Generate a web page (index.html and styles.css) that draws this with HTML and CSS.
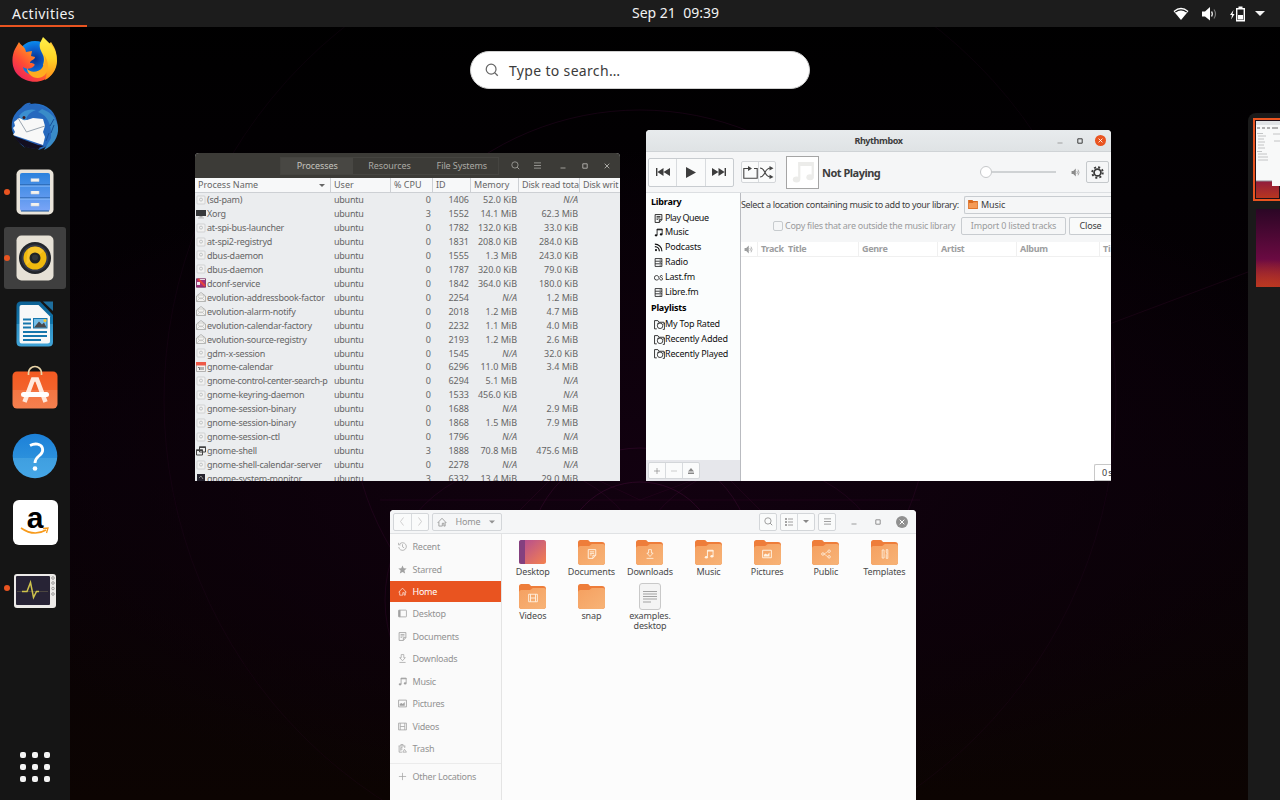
FILE: index.html
```html
<!DOCTYPE html>
<html lang="en">
<head>
<meta charset="utf-8">
<title>Activities</title>
<link rel="stylesheet" href="styles.css">
</head>
<body>
<svg class="defs" width="0" height="0">
  <defs>
    <linearGradient id="gFolder" x1="0" y1="0" x2="1" y2="1"><stop offset="0" stop-color="#f5a060"/><stop offset="1" stop-color="#f7b377"/></linearGradient>
    <linearGradient id="gDesk" x1="0" y1="0" x2="1" y2="1"><stop offset="0" stop-color="#b04a95"/><stop offset="1" stop-color="#f5814f"/></linearGradient>
    <linearGradient id="gFox" x1="1" y1="0" x2="0" y2="1"><stop offset="0" stop-color="#ffd23a"/><stop offset=".35" stop-color="#ff9a1f"/><stop offset=".65" stop-color="#ff4a36"/><stop offset="1" stop-color="#e01070"/></linearGradient>
    <linearGradient id="gTail" x1="0" y1="0" x2="0" y2="1"><stop offset="0" stop-color="#fff04a"/><stop offset=".5" stop-color="#ffd426"/><stop offset="1" stop-color="#ff8a1a"/></linearGradient>
    <radialGradient id="gGlobe"><stop offset="0" stop-color="#0a2f8a"/><stop offset=".6" stop-color="#0b62cf"/><stop offset="1" stop-color="#0a8bee"/></radialGradient>
    <linearGradient id="gBird" x1="0" y1="0" x2="1" y2="1"><stop offset="0" stop-color="#1f5fc4"/><stop offset=".5" stop-color="#2878c8"/><stop offset="1" stop-color="#2a2c8c"/></linearGradient>
    <linearGradient id="gDrawer" x1="0" y1="0" x2="0" y2="1"><stop offset="0" stop-color="#2b82dd"/><stop offset="1" stop-color="#7aa5f7"/></linearGradient>
    <linearGradient id="gBlue" x1="0" y1="0" x2="0" y2="1"><stop offset="0" stop-color="#1c80d8"/><stop offset=".54" stop-color="#2b90dc"/><stop offset=".55" stop-color="#3f9fe0"/><stop offset="1" stop-color="#45a6e6"/></linearGradient>
    <linearGradient id="gBag" x1="0" y1="0" x2="0" y2="1"><stop offset="0" stop-color="#f35a22"/><stop offset=".5" stop-color="#f3632c"/><stop offset=".51" stop-color="#f47643"/><stop offset="1" stop-color="#f5804f"/></linearGradient>
    <linearGradient id="gDoc" x1="0" y1="0" x2="0" y2="1"><stop offset="0" stop-color="#0d6194"/><stop offset=".5" stop-color="#1177ad"/><stop offset=".51" stop-color="#2d90c4"/><stop offset="1" stop-color="#40a4d8"/></linearGradient>
    <symbol id="search" viewBox="0 0 16 16"><circle cx="7" cy="7" r="5.600" fill="none" stroke="currentColor" stroke-width="1.400"/><path d="M11 11l3.600 3.600" stroke="currentColor" stroke-width="1.600"/></symbol>
    <symbol id="menu" viewBox="0 0 8 8"><path d="M0 1h8M0 4h8M0 7h8" stroke="currentColor" stroke-width=".9"/></symbol>
    <symbol id="down" viewBox="0 0 8 4"><path d="M0 0h8L4 4z" fill="currentColor"/></symbol>
    <symbol id="gear" viewBox="0 0 10 10"><rect x="1" y="1" width="8" height="8" rx=".8" fill="#f1f1f1" stroke="#c4c6c7" stroke-width=".7"/><circle cx="5" cy="4.600" r="1.500" fill="none" stroke="#bbbec0" stroke-width=".9"/></symbol>
    <symbol id="mail" viewBox="0 0 10 10"><path d="M.5 4L5 .5 9.500 4v5.500H.5z" fill="#f2f2f0" stroke="#9c9d9b" stroke-width=".7"/><path d="M.6 9.500L4 6h2l3.400 3.500M2 5V3h6v2L5 7z" fill="none" stroke="#b5b6b4" stroke-width=".6"/></symbol>
    <symbol id="note" viewBox="0 0 16 16"><path d="M5.500 12.500V2h9v9" fill="none" stroke="currentColor" stroke-width="1.500"/><path d="M5 3h10" stroke="currentColor" stroke-width="2"/><ellipse cx="3.700" cy="13" rx="2.500" ry="2" fill="currentColor"/><ellipse cx="12.700" cy="11.500" rx="2.500" ry="2" fill="currentColor"/></symbol>
    <symbol id="page" viewBox="0 0 16 16"><path d="M2 1h12v9l-4.500 5H2z M9.500 15v-5H14" fill="none" stroke="currentColor" stroke-width="1.500"/><path d="M4.500 4.500h7M4.500 7h7M4.500 9.500h3" stroke="currentColor" stroke-width="1.400"/></symbol>
    <symbol id="rack" viewBox="0 0 16 16"><path d="M2 1h12v14H2zM2 5.700h12M2 10.300h12" fill="none" stroke="currentColor" stroke-width="1.400"/><path d="M10 3.400h2M10 8h2M10 12.700h2" stroke="currentColor" stroke-width="1.300"/></symbol>
    <symbol id="rss" viewBox="0 0 16 16"><circle cx="3.500" cy="12.500" r="2" fill="currentColor"/><path d="M1.500 6.500a8 8 0 0 1 8 8M1.500 2a12.500 12.500 0 0 1 12.500 12.500" fill="none" stroke="currentColor" stroke-width="2.200"/></symbol>
    <symbol id="lastfm" viewBox="0 0 16 16"><path d="M8.500 10.500C7 12 6 12.500 4.500 12.500a3.800 4 0 1 1 0-8c3 0 3.500 2 4.500 4.500s2.200 3.500 4 3.500 2.500-1 2.500-2.200-1-1.700-2.500-2.200-2-1-2-2 1-1.700 2-1.700 2 .6 2.200 1.600" fill="none" stroke="currentColor" stroke-width="1.400"/></symbol>
    <symbol id="smart" viewBox="0 0 20 18"><path d="M18 5v-1H9L7 1H1v15h4" fill="none" stroke="currentColor" stroke-width="1.500"/><circle cx="11" cy="10.500" r="5" fill="none" stroke="currentColor" stroke-width="1.400"/><path d="M8 4.500l-1.500 3M17 8l2-3v12h-3" fill="none" stroke="currentColor" stroke-width="1.400"/></symbol>
    <symbol id="home" viewBox="0 0 16 16"><path d="M1 9.500L8 2l7 7.500M3 8v6.500h5.500V10H11v4.500h2V8" fill="none" stroke="currentColor" stroke-width="1.300"/></symbol>
    <symbol id="clock" viewBox="0 0 16 16"><path d="M3 3.500A6.800 6.800 0 1 1 1.300 9M1 1.500V5h3.500M8 4v4.500l3 2" fill="none" stroke="currentColor" stroke-width="1.300"/></symbol>
    <symbol id="star" viewBox="0 0 16 16"><path d="M8 .8l2.200 5 5.200.5-4 3.500 1.300 5.200L8 12.300 3.300 15l1.300-5.200-4-3.500 5.200-.5z" fill="currentColor"/></symbol>
    <symbol id="desk" viewBox="0 0 16 16"><rect x="1" y="2" width="14" height="12" rx="1" fill="none" stroke="currentColor" stroke-width="1.400"/><path d="M1 2h3.500v12H1z" fill="currentColor"/></symbol>
    <symbol id="dl" viewBox="0 0 16 16"><path d="M5.700 1h4.600v5.500H13L8 12 3 6.500h2.700zM2.500 15h11" fill="none" stroke="currentColor" stroke-width="1.300"/></symbol>
    <symbol id="pic" viewBox="0 0 16 16"><path d="M1 2h14v12H1z" fill="none" stroke="currentColor" stroke-width="1.500"/><path d="M3 12V9l3-2 2.500 2L12 5.500V12z" fill="currentColor"/></symbol>
    <symbol id="film" viewBox="0 0 16 16"><path d="M1 2h14v12H1zM4 2v12M12 2v12M4 8h8" fill="none" stroke="currentColor" stroke-width="1.400"/></symbol>
    <symbol id="trash" viewBox="0 0 16 16"><path d="M1 3.500h12M5 3V1h4v2M2 4v10.500h5M12 4v3M5 6v6M5 6h3M5 9h3" fill="none" stroke="currentColor" stroke-width="1.400"/><path d="M8.500 14.500l3-5 3.500 5z" fill="none" stroke="currentColor" stroke-width="1.300"/></symbol>
    <symbol id="plus" viewBox="0 0 8 8"><path d="M4 0v8M0 4h8" stroke="currentColor" stroke-width=".9"/></symbol>
    <symbol id="share" viewBox="0 0 16 16"><path d="M5 8l6-4M5 8l6 4.500" stroke="currentColor" stroke-width="1"/><g fill="none" stroke="currentColor" stroke-width="1.300"><circle cx="3" cy="8" r="2"/><circle cx="13" cy="3.500" r="2"/><circle cx="13" cy="12.500" r="2"/></g></symbol>
    <symbol id="tools" viewBox="0 0 16 16"><path d="M3.500 1.500v13h3V1.500zM10 1v4l1 2-1 2v6h2.500V1z" fill="none" stroke="currentColor" stroke-width="1.300"/></symbol>
    <symbol id="vol" viewBox="0 0 16 16"><path d="M1 5.500h3L8.500 1v14L4 10.500H1z" fill="currentColor"/><path d="M10.500 5.500q1.800 2.500 0 5M12.500 3q3.500 5 0 10" fill="none" stroke="currentColor" stroke-width="1.300"/></symbol>
    <symbol id="folder" viewBox="0 0 27 25"><path d="M0 2.500Q0 0 2.500 0h6.700q1.500 0 2 1l.8 1H24q3 0 3 3v17q0 3-3 3H3q-3 0-3-3z" fill="#ee7d3a"/><path d="M0 8.500Q0 6 2.500 6h8q1.500 0 2-1 .6-.9 2-.9H25q2 0 2 2V22q0 3-3 3H3q-3 0-3-3z" fill="url(#gFolder)"/></symbol>
    <symbol id="winmin" viewBox="0 0 6 6"><path d="M.5 5h5" stroke="currentColor" stroke-width=".9"/></symbol>
    <symbol id="winmax" viewBox="0 0 6 6"><path d="M.8.8h4.400v4.400H.8z" fill="none" stroke="currentColor"/></symbol>
    <symbol id="winx" viewBox="0 0 6 6"><path d="M.7.7l4.600 4.600M5.300.7L.7 5.300" stroke="currentColor"/></symbol>
  </defs>
</svg>

<svg class="wall" width="1280" height="800" viewBox="0 0 1280 800" fill="none" stroke="#3a0a30">
  <circle cx="640" cy="400" r="290" opacity=".35"/><circle cx="640" cy="400" r="476" opacity=".18"/>
  <circle cx="640" cy="560" r="112" opacity=".5"/><circle cx="640" cy="560" r="78" opacity=".6"/>
  <circle cx="520" cy="600" r="135" opacity=".35"/><circle cx="760" cy="600" r="135" opacity=".35"/>
  <path d="M195 290L640 500 1280 260M380 500h540M560 470l-60 60M720 470l60 60" opacity=".3"/>
</svg>

<header class="topbar">
  <div class="activities">Activities</div>
  <div class="date">Sep 21&nbsp; 09:39</div>
  <div class="tray">
    <svg width="16" height="14" viewBox="0 0 16 14"><path d="M.5 4Q8-2.500 15.500 4L8 13z" fill="#fff"/><path d="M2.300 5Q8 .8 13.700 5" stroke="#1c1c1c" fill="none" stroke-width="1.100"/></svg>
    <svg width="15" height="14" viewBox="0 0 15 14"><path d="M0 4.500h3L8 0v13.500L3 9.500H0z" fill="#fff"/><path d="M9.500 4.500q1.800 2.500 0 5" stroke="#ddd" fill="none" stroke-width="1.300"/><path d="M12 2.500q3 4.500 0 9" stroke="#777" fill="none" stroke-width="1.200"/></svg>
    <svg width="15" height="16" viewBox="0 0 15 16"><path d="M3.500 4L0 9h2l-.8 4.500L4.500 8h-2z" fill="#fff"/><path d="M6.700 2.700h7.600v12H6.700z" fill="none" stroke="#fff" stroke-width="1.400"/><path d="M8.500.5h4v2h-4zM8 9h5v4.500H8z" fill="#fff"/></svg>
    <svg class="caret" width="10" height="5"><use href="#down"/></svg>
  </div>
</header>

<nav class="dock">
  <div class="app"><svg width="46" height="46" viewBox="0 0 46 46"><circle cx="23" cy="22" r="18" fill="url(#gGlobe)"/><path d="M7 5l-4 7C-1 20-.5 32 6 38c9 9 25 9 33 0 7-8 7-21 3-28l-3-5-3 3-6 3c5 7 6 18 0 23-7 6-18 4-19-4 4 3 8 2 11-1 2-2-1-3-4-3 0-3 5-3 5-6l-4-1 1-5-6 1C13 9 8 8 7 5z" fill="url(#gFox)"/><path d="M31 0c7 7 14 11 14 24 0 9-6 16-12 19 3-7 1-11-2-15 4-11-5-13-3-22z" fill="url(#gTail)"/><path d="M15 31c2 5 11 5 15 0 3-4 4-11 1-15 7 9 7 20-1 24-7 3-15-2-15-9z" fill="#ffac20"/></svg></div>
  <div class="app"><svg width="50" height="48" viewBox="0 0 50 48"><circle cx="25" cy="24" r="22.500" fill="url(#gBird)"/><path d="M11 6Q16 0 21 1l-2 2q17-2 24 10c5 8 4 18-1 25-4 6-9 9-14 10 3-3 6-8 6-12l-14 5-8-2-7-8q2 6 6 10l4 5Q4 37 2 28 0 14 11 6z" fill="#2669be"/><path d="M28 10q14 5 13 26l-7 12c9-4 15-13 14-23q-2-13-16-18z" fill="#398bc8"/><path d="M44 23l-3 8M39 31l-3 8M44 17l-4 7" stroke="#174f9a"/><path d="M4 20l5-4 8 2 6-2 10 1 2 7-2 6 2 5-2 8L3 33l2-3-2-4 2-2z" fill="#f8f8f8"/><path d="M8 16l8.500 14L35 24" stroke="#9aa5b0" fill="none"/><path d="M9 14q6-8 17-6-9 3-10 10-4 1-7-4z" fill="#3b8fd0"/><circle cx="14" cy="15.500" r="1.500" fill="#401c20"/><path d="M4 34l24 9 6 1-8 3Q10 46 4 34z" fill="#130e20"/></svg></div>
  <div class="app"><i class="dot"></i><svg width="38" height="46" viewBox="0 0 38 46"><rect x=".5" y=".5" width="37" height="45" rx="5" fill="#e9e4da"/><rect x="4" y="4" width="30" height="38" rx="2" fill="url(#gDrawer)"/><path d="M4 16h30M4 29h30M5 42h28" stroke="#1a5296"/><path d="M4 17h30M4 30h30" stroke="#8ec1ff"/><path d="M15 9.500v3h8v-3M15 22v3h8v-3M15 34v3h8v-3" fill="#f4f2ee" stroke="#ccd4dc" stroke-width=".6"/></svg></div>
  <div class="app active"><i class="dot"></i><svg width="38" height="46" viewBox="0 0 38 46"><rect x=".5" y=".5" width="37" height="45" rx="5" fill="#e6e1d6"/><circle cx="19" cy="23" r="16" fill="#22252a"/><circle cx="19" cy="23" r="13.500" fill="#363a48"/><circle cx="19" cy="23" r="11.500" fill="#f0b90e"/><path d="M10 30L28 16a11.500 11.500 0 0 0-16-2z" fill="#ffd045" opacity=".55"/><circle cx="19" cy="23" r="5.500" fill="#222426"/><circle cx="19" cy="22.500" r="3" fill="#34373a"/></svg></div>
  <div class="app"><svg width="38" height="46" viewBox="0 0 38 46"><path d="M5 .5h19L37 14v27q0 4.500-4.500 4.500H5Q.5 45.500.5 41V5Q.5.500 5 .5z" fill="url(#gDoc)"/><path d="M5.500 4h17L34 15.500V40q0 2.500-2.500 2.500h-26Q3.500 42.500 3.500 40V6q0-2 2-2z" fill="#f7f8f8"/><path d="M27 .5h10V10z" fill="#1e6e9d"/><path d="M7 18.500h8M7 22.500h8M7 26.500h8M7 31h24M7 35h24M7 39h18" stroke="#1676ac" stroke-width="2"/><rect x="17" y="17" width="14.500" height="10.500" fill="#1676ac"/><path d="M18 18h12.500v8.500H18z" fill="#74bde6"/><path d="M18 26.500l5-6 3 3 2-2 2.500 5z" fill="#48494b"/><circle cx="29" cy="19.500" r="1.500" fill="#f7c62f"/></svg></div>
  <div class="app bag"><svg width="46" height="44" viewBox="0 0 46 44"><rect x=".5" y="6.500" width="45" height="37" rx="4.500" fill="url(#gBag)"/><path d="M16.500 10V8a6.500 6.500 0 0 1 13 0v2" fill="none" stroke="#ead5a8" stroke-width="1.700"/><path d="M12.500 37L21 14.500h4L33.500 37" fill="none" stroke="#ffe9dd" stroke-width="4.500"/><rect x="9" y="27" width="28" height="5" rx="2.500" fill="#fff"/></svg></div>
  <div class="app"><svg width="46" height="46" viewBox="0 0 46 46"><circle cx="23" cy="23" r="22.300" fill="url(#gBlue)"/><path d="M18 12.500q4-2 7.500-1.300c5.500 1 6.500 6.300 3.500 9.800-2.800 3.200-6 3.800-6 9" fill="none" stroke="#fff" stroke-width="2.800"/><circle cx="23" cy="35.500" r="2.300" fill="#fff"/></svg></div>
  <div class="app"><div class="amazon"><b>a</b><svg width="30" height="9" viewBox="0 0 30 9"><path d="M1 1q13 9 25 2" fill="none" stroke="#f79a1b" stroke-width="1.600"/><path d="M23 1.500l5-.5-1.500 5" fill="none" stroke="#f79a1b" stroke-width="1.300"/></svg></div></div>
  <div class="app monitor"><i class="dot"></i><svg width="42" height="34" viewBox="0 0 42 34"><rect x="0" y="0" width="42" height="34" rx="3" fill="#eceae8"/><rect x="2" y="2" width="34" height="29" rx="1" fill="#272335"/><path d="M3 17.500h31" stroke="#4b4641"/><path d="M8 17.500h5l3.500-9 3 15 3-6H25" fill="none" stroke="#cfc34c" stroke-width="1.500"/><g fill="none" stroke="#8a8988" stroke-width=".8"><circle cx="39" cy="4" r="1.300"/><circle cx="39" cy="9" r="1.300"/><circle cx="39" cy="14.500" r="1.300"/><circle cx="39" cy="20" r="1.300"/></g></svg></div>
  <div class="appgrid"><i></i><i></i><i></i><i></i><i></i><i></i><i></i><i></i><i></i></div>
</nav>

<div class="searchbox"><svg width="14" height="14"><use href="#search"/></svg><span>Type to search…</span></div>

<section class="window sysmon">
  <div class="bar">
    <div class="tabs"><span class="on">Processes</span><span>Resources</span><span>File Systems</span></div>
    <svg class="s1" width="9" height="9"><use href="#search"/></svg><svg class="s2" width="7" height="7"><use href="#menu"/></svg><svg class="s3" width="6" height="6"><use href="#winmin"/></svg><svg class="s4" width="6" height="6"><use href="#winmax"/></svg><svg class="s5" width="6" height="6"><use href="#winx"/></svg>
  </div>
  <div class="prow phead"><div class="sort">Process Name<svg width="6" height="3"><use href="#down"/></svg></div><div>User</div><div>% CPU</div><div>ID</div><div>Memory</div><div>Disk read tota</div><div>Disk writ</div></div>
  <div class="plist">
    <div class="prow"><div><svg><use href="#gear"/></svg>(sd-pam)</div><div>ubuntu</div><div>0</div><div>1406</div><div>52.0 KiB</div><div><em>N/A</em></div></div>
    <div class="prow"><div><svg viewBox="0 0 10 10"><path d="M0 1h10v6H0z" fill="#36383a"/><path d="M3.500 7h3v1.500h-3z" fill="#aaa"/><path d="M2 9h6" stroke="#bbb"/></svg>Xorg</div><div>ubuntu</div><div>3</div><div>1552</div><div>14.1 MiB</div><div>62.3 MiB</div></div>
    <div class="prow"><div><svg><use href="#gear"/></svg>at-spi-bus-launcher</div><div>ubuntu</div><div>0</div><div>1782</div><div>132.0 KiB</div><div>33.0 KiB</div></div>
    <div class="prow"><div><svg><use href="#gear"/></svg>at-spi2-registryd</div><div>ubuntu</div><div>0</div><div>1831</div><div>208.0 KiB</div><div>284.0 KiB</div></div>
    <div class="prow"><div><svg><use href="#gear"/></svg>dbus-daemon</div><div>ubuntu</div><div>0</div><div>1555</div><div>1.3 MiB</div><div>243.0 KiB</div></div>
    <div class="prow"><div><svg><use href="#gear"/></svg>dbus-daemon</div><div>ubuntu</div><div>0</div><div>1787</div><div>320.0 KiB</div><div>79.0 KiB</div></div>
    <div class="prow"><div><svg viewBox="0 0 10 10"><path d="M.4.8h9.200v8.400H.4z" fill="#a4307c" stroke="#6d2456" stroke-width=".8"/><path d="M2 1.500h7" stroke="#e8d9e2"/><path d="M2 1l7 7" stroke="#e5443c" stroke-width="2"/><path d="M1 4h3v3H1z" fill="#f0e8ee"/></svg>dconf-service</div><div>ubuntu</div><div>0</div><div>1842</div><div>364.0 KiB</div><div>180.0 KiB</div></div>
    <div class="prow"><div><svg><use href="#mail"/></svg>evolution-addressbook-factor</div><div>ubuntu</div><div>0</div><div>2254</div><div><em>N/A</em></div><div>1.2 MiB</div></div>
    <div class="prow"><div><svg><use href="#mail"/></svg>evolution-alarm-notify</div><div>ubuntu</div><div>0</div><div>2018</div><div>1.2 MiB</div><div>4.7 MiB</div></div>
    <div class="prow"><div><svg><use href="#mail"/></svg>evolution-calendar-factory</div><div>ubuntu</div><div>0</div><div>2232</div><div>1.1 MiB</div><div>4.0 MiB</div></div>
    <div class="prow"><div><svg><use href="#mail"/></svg>evolution-source-registry</div><div>ubuntu</div><div>0</div><div>2193</div><div>1.2 MiB</div><div>2.6 MiB</div></div>
    <div class="prow"><div><svg><use href="#gear"/></svg>gdm-x-session</div><div>ubuntu</div><div>0</div><div>1545</div><div><em>N/A</em></div><div>32.0 KiB</div></div>
    <div class="prow"><div><svg viewBox="0 0 10 10"><path d="M.5.500h9v9h-9z" fill="#f3f1ef" stroke="#9a9896" stroke-width=".7"/><path d="M0 0h10v3.500H0z" fill="#ee5a48"/><path d="M2 5.500h1.500V8M5 5v3M7 5v3" stroke="#777" fill="none"/></svg>gnome-calendar</div><div>ubuntu</div><div>0</div><div>6296</div><div>11.0 MiB</div><div>3.4 MiB</div></div>
    <div class="prow tight"><div><svg><use href="#gear"/></svg>gnome-control-center-search-p</div><div>ubuntu</div><div>0</div><div>6294</div><div>5.1 MiB</div><div><em>N/A</em></div></div>
    <div class="prow"><div><svg><use href="#gear"/></svg>gnome-keyring-daemon</div><div>ubuntu</div><div>0</div><div>1533</div><div>456.0 KiB</div><div><em>N/A</em></div></div>
    <div class="prow"><div><svg><use href="#gear"/></svg>gnome-session-binary</div><div>ubuntu</div><div>0</div><div>1688</div><div><em>N/A</em></div><div>2.9 MiB</div></div>
    <div class="prow"><div><svg><use href="#gear"/></svg>gnome-session-binary</div><div>ubuntu</div><div>0</div><div>1868</div><div>1.5 MiB</div><div>7.9 MiB</div></div>
    <div class="prow"><div><svg><use href="#gear"/></svg>gnome-session-ctl</div><div>ubuntu</div><div>0</div><div>1796</div><div><em>N/A</em></div><div><em>N/A</em></div></div>
    <div class="prow"><div><svg viewBox="0 0 10 10"><path d="M3.500 1h6v5h-6zM.5 4h6v5h-6z" fill="#eee" stroke="#444"/><path d="M3 1.200h7M0 4.200h7" stroke="#444" stroke-width="1.400"/></svg>gnome-shell</div><div>ubuntu</div><div>3</div><div>1888</div><div>70.8 MiB</div><div>475.6 MiB</div></div>
    <div class="prow"><div><svg><use href="#gear"/></svg>gnome-shell-calendar-server</div><div>ubuntu</div><div>0</div><div>2278</div><div><em>N/A</em></div><div><em>N/A</em></div></div>
    <div class="prow"><div><svg viewBox="0 0 10 10"><path d="M1 1h8v7H1z" fill="#25232f"/><path d="M3 5l2-2 2 3" stroke="#888" fill="none"/></svg>gnome-system-monitor</div><div>ubuntu</div><div>3</div><div>6332</div><div>13.4 MiB</div><div>29.0 MiB</div></div>
  </div>
</section>

<section class="window rhythm">
  <div class="rtitle"><b>Rhythmbox</b><div class="wbtn"><svg width="6" height="6" class="dim"><use href="#winmin"/></svg><svg width="6" height="6"><use href="#winmax"/></svg><span class="close"><svg width="5" height="5"><use href="#winx"/></svg></span></div></div>
  <div class="rtool">
    <div class="seg play"><span><svg width="14" height="8" viewBox="0 0 14 8"><path d="M0 0h1.400v8H0zM7.500 0v8L1.400 4zM14 0v8L7.500 4z" fill="#3d3d3d"/></svg></span><span><svg width="10" height="11" viewBox="0 0 10 11"><path d="M0 0l10 5.500L0 11z" fill="#3d3d3d"/></svg></span><span><svg width="14" height="8" viewBox="0 0 14 8"><path d="M12.600 0H14v8h-1.400zM6.500 0v8l6.100-4zM0 0v8l6.500-4z" fill="#3d3d3d"/></svg></span></div>
    <div class="seg mode"><span><svg width="15" height="13" viewBox="0 0 15 13"><path d="M2 2.500H.8v9.700h13.400V2.500H11" fill="none" stroke="#444" stroke-width="1.100"/><path d="M1 2.500h5" stroke="#444" stroke-width="1.100"/><path d="M5 0l4 2.500L5 5z" fill="#444"/></svg></span><span><svg width="14" height="13" viewBox="0 0 14 13"><path d="M0 2q3 0 5 4.500T11 11M0 11q3 0 5-4.500T11 2" fill="none" stroke="#444" stroke-width="1.100"/><path d="M9.500 0l4 2.200-4 2.300zM9.500 8.500l4 2.400-4 2.100z" fill="#444"/></svg></span></div>
    <div class="cover"><svg width="24" height="24"><use href="#note"/></svg></div>
    <b class="np">Not Playing</b>
    <div class="slider"><i></i></div>
    <svg class="rv" width="9" height="9"><use href="#vol"/></svg>
    <div class="cog"><svg width="13" height="13" viewBox="0 0 14 14"><circle cx="7" cy="7" r="3.700" fill="none" stroke="#3b3b3b" stroke-width="1.900"/><circle cx="7" cy="7" r="5.700" fill="none" stroke="#3b3b3b" stroke-width="2" stroke-dasharray="2.200 2.276"/></svg></div>
  </div>
  <div class="rbody">
    <aside class="rside">
      <h4>Library</h4>
      <p class="pq"><svg><use href="#page"/></svg>Play Queue</p><p><svg><use href="#note"/></svg>Music</p><p><svg><use href="#rss"/></svg>Podcasts</p><p><svg><use href="#rack"/></svg>Radio</p><p><svg><use href="#lastfm"/></svg>Last.fm</p><p><svg><use href="#rack"/></svg>Libre.fm</p>
      <h4 class="pl">Playlists</h4>
      <p><svg class="w"><use href="#smart"/></svg>My Top Rated</p><p><svg class="w"><use href="#smart"/></svg>Recently Added</p><p><svg class="w"><use href="#smart"/></svg>Recently Played</p>
      <div class="rfoot"><div class="seg"><span><svg width="7" height="7"><use href="#plus"/></svg></span><span class="lite"><svg width="7" height="7" viewBox="0 0 7 7"><path d="M0 3.500h7" stroke="currentColor"/></svg></span><span><svg width="6" height="6" viewBox="0 0 6 6"><path d="M3 0l3 3.600H0zM0 4.500h6V6H0z" fill="currentColor"/></svg></span></div></div>
    </aside>
    <div class="rmain">
      <div class="loc"><span class="q">Select a location containing music to add to your library:</span><div class="combo"><svg width="10" height="9" viewBox="0 0 27 25"><path d="M0 0h12l2 3h13v22H0z" fill="#d96a1f"/><path d="M2 8h11l2-2h10v17H2z" fill="#f59a55"/></svg>Music</div></div>
      <div class="copy"><i class="check"></i><span class="c">Copy files that are outside the music library</span><span class="btn off">Import 0 listed tracks</span><span class="btn cl">Close</span></div>
      <div class="thead"><span><svg width="9" height="9"><use href="#vol"/></svg></span><span>Track</span><span>Title</span><span>Genre</span><span>Artist</span><span>Album</span><span>Ti</span></div>
      <div class="status">0 s</div>
    </div>
  </div>
</section>

<section class="window files">
  <div class="fbar">
    <div class="seg nav"><span><svg width="4" height="9" viewBox="0 0 4 9"><path d="M3.500.5L.5 4.500l3 4" fill="none" stroke="currentColor" stroke-width=".8"/></svg></span><span><svg width="4" height="9" viewBox="0 0 4 9"><path d="M.5.500l3 4-3 4" fill="none" stroke="currentColor" stroke-width=".8"/></svg></span></div>
    <div class="path"><svg width="10" height="10"><use href="#home"/></svg><span>Home</span><svg width="6" height="4"><use href="#down"/></svg></div>
    <div class="seg one"><span><svg width="9" height="9"><use href="#search"/></svg></span></div>
    <div class="seg two"><span><svg width="8" height="8" viewBox="0 0 8 8"><path d="M0 1h2M0 4h2M0 7h2" stroke="currentColor" stroke-width="1.500"/><path d="M3 1h5M3 4h5M3 7h5" stroke="currentColor" stroke-width=".8"/></svg></span><span><svg width="6" height="3"><use href="#down"/></svg></span></div>
    <div class="seg one"><span><svg width="7" height="7"><use href="#menu"/></svg></span></div>
    <div class="wbtn"><svg width="6" height="6"><use href="#winmin"/></svg><svg width="6" height="6"><use href="#winmax"/></svg><span class="close"><svg width="6" height="6"><use href="#winx"/></svg></span></div>
  </div>
  <div class="fbody">
    <aside class="fside">
      <p><svg><use href="#clock"/></svg>Recent</p><p><svg><use href="#star"/></svg>Starred</p><p class="sel"><svg><use href="#home"/></svg>Home</p><p><svg><use href="#desk"/></svg>Desktop</p><p><svg><use href="#page"/></svg>Documents</p><p><svg><use href="#dl"/></svg>Downloads</p><p><svg><use href="#note"/></svg>Music</p><p><svg><use href="#pic"/></svg>Pictures</p><p><svg><use href="#film"/></svg>Videos</p><p><svg><use href="#trash"/></svg>Trash</p>
      <p class="other"><svg viewBox="-1 -1 10 10"><path d="M4 0v8M0 4h8" stroke="currentColor" stroke-width=".8"/></svg>Other Locations</p>
    </aside>
    <div class="fgrid">
      <div><span class="ic"><svg width="27" height="24" viewBox="0 0 27 24"><rect width="27" height="24" rx="2.500" fill="url(#gDesk)"/><path d="M2.500 0H6v24H2.500Q0 24 0 21.500v-19Q0 0 2.500 0z" fill="#84407f"/></svg></span>Desktop</div>
      <div><span class="ic"><svg width="27" height="25"><use href="#folder"/></svg><svg class="em"><use href="#page"/></svg></span>Documents</div>
      <div><span class="ic"><svg width="27" height="25"><use href="#folder"/></svg><svg class="em"><use href="#dl"/></svg></span>Downloads</div>
      <div><span class="ic"><svg width="27" height="25"><use href="#folder"/></svg><svg class="em"><use href="#note"/></svg></span>Music</div>
      <div><span class="ic"><svg width="27" height="25"><use href="#folder"/></svg><svg class="em"><use href="#pic"/></svg></span>Pictures</div>
      <div><span class="ic"><svg width="27" height="25"><use href="#folder"/></svg><svg class="em"><use href="#share"/></svg></span>Public</div>
      <div><span class="ic"><svg width="27" height="25"><use href="#folder"/></svg><svg class="em"><use href="#tools"/></svg></span>Templates</div>
      <div><span class="ic"><svg width="27" height="25"><use href="#folder"/></svg><svg class="em"><use href="#film"/></svg></span>Videos</div>
      <div><span class="ic"><svg width="27" height="25"><use href="#folder"/></svg></span>snap</div>
      <div><span class="ic"><svg width="22" height="27" viewBox="0 0 22 27"><rect x=".5" y=".5" width="21" height="26" rx="2.500" fill="#f4f4f4" stroke="#c9c9c9"/><path d="M4 8.500h14M4 11h14M4 13.500h14M4 16h14M4 19h8" stroke="#a2a2a2"/></svg></span>examples.<br>desktop</div>
    </div>
  </div>
</section>

<aside class="spaces">
  <div class="thumb cur"><div class="mini"><svg width="27" height="65" viewBox="0 0 27 65"><path d="M0 0h27v65H16v-5H0z" fill="#f8f9f9"/><path d="M0 0h27v4H0z" fill="#e1e4e6"/><path d="M1 7h3M6 7h3M11 7h3M16 7h6" stroke="#999" stroke-width="1.500"/><path d="M1 12.500h6M2 15h8M2 18h6M2 21h7M2 24h6M2 27h7M1 30.500h5M2 33h9M2 36h10M2 39h10M17 13h10M18 20h9" stroke="#b5b7b9" stroke-width=".8"/><path d="M0 60h16" stroke="#8e8790"/></svg></div></div>
  <div class="thumb"></div>
</aside>
</body>
</html>
```
FILE: styles.css
```css
* { box-sizing: border-box; }
body {
  margin: 0; width: 1280px; height: 800px; overflow: hidden; position: relative;
  background: radial-gradient(ellipse 760px 330px at 660px 480px, #120110 0%, rgba(14, 1, 12, .7) 55%, transparent 100%), linear-gradient(#000 0, #030003 25%, #070106 60%, #0c0402 100%);
  font-family: "Noto Sans", "Open Sans", sans-serif; font-size: 9px; color: #3d3d3d;
}
svg { display: block; flex: none; }
.defs { position: absolute; }
.wall { position: absolute; left: 0; top: 0; }
h4, p { margin: 0; }

.topbar { position: relative; height: 27px; background: #1c1c1c; display: flex; justify-content: space-between; color: #f2f2f2; font-size: 14px; line-height: 26px; }
.activities { width: 87px; padding-left: 12px; border-bottom: 2px solid #e95420; letter-spacing: .47px; line-height: 27px; }
.date { position: absolute; left: 632px; white-space: nowrap; }
.tray { display: flex; align-items: center; gap: 13px; padding-right: 15px; }
.caret { margin-left: -3px; }

.dock { position: absolute; left: 0; top: 27px; width: 70px; height: 773px; background: #151515; display: flex; flex-direction: column; }
.app { position: relative; height: 66px; flex: none; display: flex; align-items: center; justify-content: center; }
.app.active::before { content: ""; position: absolute; inset: 2px 4px; border-radius: 3px; background: #3f3f3f; }
.app > svg { position: relative; }
.app.bag { padding-bottom: 6px; }
.app.monitor { padding-top: 6px; }
.dot { position: absolute; left: 4px; top: 30px; width: 6px; height: 6px; border-radius: 50%; background: #e95420; }
.amazon { width: 45px; height: 45px; border-radius: 6px; background: #fff; display: flex; flex-direction: column; align-items: center; }
.amazon b { font: bold 30px/35px "Liberation Sans", sans-serif; height: 27px; color: #000; }
.appgrid { margin: auto auto 18px; display: grid; grid-template-columns: repeat(3, 6px); gap: 6px; }
.appgrid i { height: 6px; border-radius: 2px; background: #f4f4f4; }

.searchbox { position: absolute; left: 470px; top: 51px; width: 340px; height: 38px; border-radius: 19px; background: #fff; border: 1px solid #d0d0d0; display: flex; align-items: center; gap: 10px; padding: 0 0 1px 14px; font-size: 14px; letter-spacing: .33px; color: #3b3b3b; }
.searchbox svg { color: #666; }
.searchbox span { padding-top: 1px; }

.window { position: absolute; overflow: hidden; display: flex; flex-direction: column; border-radius: 4px 4px 0 0; }
.seg { display: flex; border: 1px solid #d3d6d9; border-radius: 2px; background: #fafbfb; color: #888; }
.seg span { flex: 1; display: flex; align-items: center; justify-content: center; }
.seg span + span { border-left: 1px solid #d8dbde; }

.sysmon { left: 195px; top: 153px; width: 425px; height: 328px; background: #ebedef; color: #666; }
.bar { height: 25px; flex: none; background: #3c3b37; color: #aaa9a4; display: flex; align-items: center; }
.tabs { display: flex; margin-left: 85px; width: 219px; height: 18px; border: 1px solid #454440; }
.tabs span { flex: 1; text-align: center; line-height: 16px; letter-spacing: -.1px; }
.tabs .on { background: #484743; color: #c4c3be; }
.s1 { margin-left: 12px; } .s2 { margin-left: 14px; } .s3 { margin-left: 19px; } .s4 { margin-left: 16px; } .s5 { margin-left: 16px; }
.prow { display: grid; grid-template-columns: 136px 60px 42px 38px 48px 61px 40px; height: 13.95px; line-height: 14px; white-space: nowrap; flex: none; }
.prow > div { overflow: hidden; text-align: right; padding-right: 2px; }
.plist .prow > div:first-child { display: flex; gap: 1px; text-align: left; padding: 0 0 0 1px; letter-spacing: -.25px; }
.plist .prow.tight > div:first-child { letter-spacing: -.4px; }
.plist .prow > div:nth-child(2) { text-align: left; padding-left: 3px; letter-spacing: -.25px; }
.plist .prow svg { width: 10px; height: 10px; margin-top: 1.500px; }
.plist { padding-top: .2px; }
.phead { height: 15px; border-bottom: 1px solid #cdd0d4; background: #f7f8f9; }
.phead > div { text-align: left; padding: 0 0 0 3px; border-right: 1px solid #cdd0d4; }
.phead > div:nth-child(n+6) { letter-spacing: -.15px; }
.phead > div:last-child { border: 0; }
.phead .sort { display: flex; justify-content: space-between; align-items: center; padding-right: 5px; }

.rhythm { left: 646px; top: 130px; width: 465px; height: 351px; background: #f5f6f7; }
.rtitle { height: 22px; flex: none; background: linear-gradient(#e8ebed, #dfe3e5); border-bottom: 1px solid #cfd3d6; display: flex; align-items: center; justify-content: center; position: relative; letter-spacing: -.4px; }
.wbtn { display: flex; align-items: center; gap: 15px; }
.rtitle .wbtn { position: absolute; right: 5px; gap: 14px; }
.dim { color: #999; }
.close { width: 11px; height: 11px; border-radius: 50%; background: #e95420; color: #fff; display: flex; align-items: center; justify-content: center; margin-left: -2px; }
.rtool { height: 41px; flex: none; border-bottom: 1px solid #dcdfe2; display: flex; align-items: center; padding-left: 2px; }
.rtool > * { position: relative; }
.play { width: 86px; height: 29px; border-color: #c8ccd0; }
.mode { width: 35px; height: 22px; margin-left: 7px; }
.cover { margin-left: 10px; width: 33px; height: 33px; border: 1px solid #a5a5a5; background: #fff; color: #ececea; display: flex; align-items: center; justify-content: center; }
.np { font-size: 11px; margin-left: 3px; width: 158px; letter-spacing: -.5px; }
.slider { width: 76px; height: 2px; background: #cfd2d4; }
.slider i { position: absolute; left: 0; top: -5px; width: 12px; height: 12px; border: 1px solid #c6c8ca; border-radius: 50%; background: #fff; }
.rv { margin-left: 15px; color: #8b8b8b; }
.cog { margin-left: 6px; width: 23px; height: 22px; border: 1px solid #c5c9cc; border-radius: 2px; display: flex; align-items: center; justify-content: center; }
.rbody { flex: 1; display: flex; }
.rside { width: 95px; background: #fbfdfd; border-right: 1px solid #b9bbc0; color: #111; display: flex; flex-direction: column; }
.rside h4 { font-size: 9px; height: 17px; line-height: 17px; padding-left: 5px; color: #000; letter-spacing: -.2px; }
.rside h4.pl { height: 18px; }
.rside p { height: 14.800px; line-height: 14.800px; display: flex; align-items: center; gap: 2px; padding-left: 8px; white-space: nowrap; letter-spacing: -.2px; }
.rside .pq { letter-spacing: -.45px; margin-top: .7px; }
.rside svg { width: 9px; height: 9px; }
.rside svg.w { width: 11px; height: 10px; margin-right: -2px; }
.rfoot { margin-top: auto; height: 21px; background: #e6e7eb; padding: 2px; }
.rfoot .seg { width: 52px; height: 17px; }
.rfoot .lite { color: #c5c5c5; }
.rfoot svg { width: 6px; height: 6px; }
.rmain { flex: 1; min-width: 0; background: #fff; display: flex; flex-direction: column; white-space: nowrap; }
.loc { height: 23px; background: #f5f6f7; display: flex; align-items: center; }
.q { width: 223px; letter-spacing: -.33px; }
.combo { flex: 1; height: 18px; border: 1px solid #c8ccd0; border-right: 0; border-radius: 2px 0 0 2px; display: flex; align-items: center; gap: 3px; padding-left: 3px; letter-spacing: -.1px; }
.copy { height: 26px; background: #f5f6f7; display: flex; align-items: flex-start; padding: 1px 0 0 32px; color: #9b9c9d; line-height: 18px; }
.check { width: 10px; height: 10px; margin-top: 4px; border: 1px solid #c7cbce; border-radius: 2px; }
.c { width: 178px; padding-left: 2px; letter-spacing: -.28px; }
.btn { height: 18px; line-height: 16px; border: 1px solid #c8ccd0; border-radius: 2px; text-align: center; width: 105px; letter-spacing: -.2px; }
.btn.cl { width: 42px; margin-left: 3px; border-right: 0; border-radius: 2px 0 0 2px; color: #3d3d3d; background: #f9fafa; }
.thead { height: 15px; line-height: 14px; border-bottom: 1px solid #f0f0f0; display: grid; grid-template-columns: 17px 27px 74px 79px 79px 83px 11px; font-weight: bold; color: #9d9e9f; letter-spacing: -.3px; }
.thead span { padding-left: 3px; border-right: 1px solid #f0f0f0; overflow: hidden; }
.thead span:nth-child(2), .thead span:last-child { border: 0; }
.thead svg { margin-top: 3px; }
.status { margin: auto 0 0 auto; width: 17px; height: 17px; border: 1px solid #c8c8c8; border-right: 0; border-radius: 2px 0 0 0; padding-left: 7px; line-height: 16px; overflow: hidden; letter-spacing: -.6px; }

.files { left: 390px; top: 510px; width: 526px; height: 290px; background: #fcfcfc; color: #929292; }
.fbar { height: 24px; flex: none; background: #f5f6f7; border-bottom: 1px solid #e0e2e4; display: flex; align-items: center; padding-left: 3px; }
.fbar .seg, .path { height: 18px; }
.fbar .nav { width: 36px; color: #c5c5c5; }
.path { margin: 0 257px 0 3px; width: 70px; border: 1px solid #d3d6d9; border-radius: 2px; display: flex; align-items: center; padding: 0 6px 0 4px; justify-content: space-between; letter-spacing: -.2px; }
.one { width: 18px; margin-right: 3px; }
.two { width: 35px; margin-right: 3px; }
.fbar .wbtn { margin-left: 12px; gap: 18px; }
.fbar .close { background: #909090; width: 12px; height: 12px; margin-left: -3px; }
.fbody { flex: 1; display: flex; }
.fside { width: 112px; background: #fafafa; border-right: 1px solid #e4e4e4; padding-top: 1.500px; }
.fside p { height: 22.450px; display: flex; align-items: center; gap: 5.500px; padding-left: 8px; letter-spacing: -.25px; }
.fside svg { width: 9px; height: 9px; opacity: .85; }
.fside .sel { background: #e95420; color: #fff; height: 21px; margin: .7px 0; }
.fside .other { margin-top: 3px; border-top: 1px solid #ebebeb; height: 27px; }
.fgrid { flex: 1; display: grid; grid-template-columns: repeat(7, 58.600px); grid-template-rows: 44px 56px; padding: 4px 0 0 1.500px; color: #4a4a4a; text-align: center; line-height: 10px; letter-spacing: -.15px; }
.fgrid .ic { height: 28px; margin-bottom: 1px; display: flex; align-items: center; justify-content: center; position: relative; }
.em { position: absolute; left: 24.500px; top: 11px; width: 10px; height: 10px; color: #fff3e4; }

.spaces { position: absolute; left: 1248px; top: 113px; width: 32px; height: 687px; background: #1a1a1a; border-radius: 8px 0 0 0; padding: 5px 0 0 5px; }
.thumb { height: 78px; margin: 8px 0 0 3px; background: radial-gradient(ellipse 60px 30px at 10px 80px, rgba(190, 60, 30, .8), transparent), linear-gradient(#2b0625, #6b0a42 65%, #b02c28); }
.thumb.cur { height: 83px; margin: 0; padding: 1px; border: 2px solid #e95420; border-right: 0; background: #201018; }
.mini { height: 77px; background: linear-gradient(#8b1840 75%, #b8361f); }
```
